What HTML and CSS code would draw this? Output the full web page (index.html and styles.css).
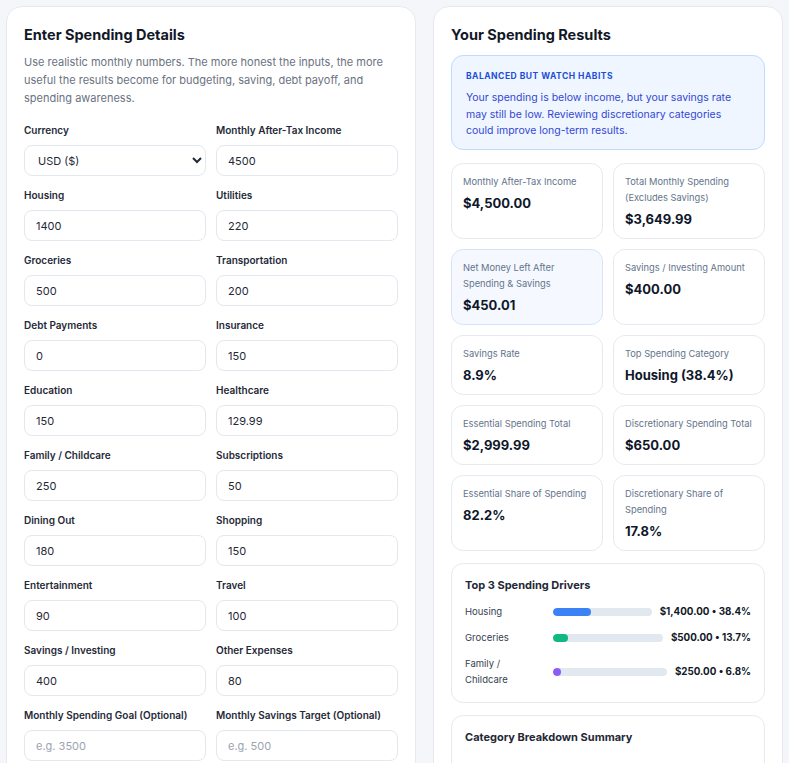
FILE: index.html
```html
<!DOCTYPE html>
<html lang="en">
<head>
    <meta charset="UTF-8">
    <meta name="viewport" content="width=device-width, initial-scale=1.0">
    <title>Spending Calculator</title>
    <link rel="stylesheet" href="styles.css">
</head>
<body>
    <div class="layout">
        <div class="panel form-panel">
            <h2>Enter Spending Details</h2>
            <p class="intro">Use realistic monthly numbers. The more honest the inputs, the more useful the results become for budgeting, saving, debt payoff, and spending awareness.</p>
            <div class="form-grid">
                <div class="field">
                    <label for="currency">Currency</label>
                    <select id="currency">
                        <option>USD ($)</option>
                        <option>EUR (€)</option>
                        <option>GBP (£)</option>
                    </select>
                </div>
                <div class="field">
                    <label for="income">Monthly After-Tax Income</label>
                    <input type="text" id="income" value="4500">
                </div>
                <div class="field">
                    <label for="housing">Housing</label>
                    <input type="text" id="housing" value="1400">
                </div>
                <div class="field">
                    <label for="utilities">Utilities</label>
                    <input type="text" id="utilities" value="220">
                </div>
                <div class="field">
                    <label for="groceries">Groceries</label>
                    <input type="text" id="groceries" value="500">
                </div>
                <div class="field">
                    <label for="transport">Transportation</label>
                    <input type="text" id="transport" value="200">
                </div>
                <div class="field">
                    <label for="debt">Debt Payments</label>
                    <input type="text" id="debt" value="0">
                </div>
                <div class="field">
                    <label for="insurance">Insurance</label>
                    <input type="text" id="insurance" value="150">
                </div>
                <div class="field">
                    <label for="education">Education</label>
                    <input type="text" id="education" value="150">
                </div>
                <div class="field">
                    <label for="healthcare">Healthcare</label>
                    <input type="text" id="healthcare" value="129.99">
                </div>
                <div class="field">
                    <label for="family">Family / Childcare</label>
                    <input type="text" id="family" value="250">
                </div>
                <div class="field">
                    <label for="subs">Subscriptions</label>
                    <input type="text" id="subs" value="50">
                </div>
                <div class="field">
                    <label for="dining">Dining Out</label>
                    <input type="text" id="dining" value="180">
                </div>
                <div class="field">
                    <label for="shopping">Shopping</label>
                    <input type="text" id="shopping" value="150">
                </div>
                <div class="field">
                    <label for="fun">Entertainment</label>
                    <input type="text" id="fun" value="90">
                </div>
                <div class="field">
                    <label for="travel">Travel</label>
                    <input type="text" id="travel" value="100">
                </div>
                <div class="field">
                    <label for="savings">Savings / Investing</label>
                    <input type="text" id="savings" value="400">
                </div>
                <div class="field">
                    <label for="other">Other Expenses</label>
                    <input type="text" id="other" value="80">
                </div>
                <div class="field">
                    <label for="goal">Monthly Spending Goal (Optional)</label>
                    <input type="text" id="goal" placeholder="e.g. 3500">
                </div>
                <div class="field">
                    <label for="target">Monthly Savings Target (Optional)</label>
                    <input type="text" id="target" placeholder="e.g. 500">
                </div>
            </div>
        </div>

        <div class="panel results-panel">
            <h2>Your Spending Results</h2>
            <div class="status-box">
                <div class="status-title">Balanced but watch habits</div>
                <p>Your spending is below income, but your savings rate may still be low. Reviewing discretionary categories could improve long-term results.</p>
            </div>

            <div class="stat-grid">
                <div class="stat">
                    <div class="stat-label">Monthly After-Tax Income</div>
                    <div class="stat-value">$4,500.00</div>
                </div>
                <div class="stat">
                    <div class="stat-label">Total Monthly Spending (Excludes Savings)</div>
                    <div class="stat-value">$3,649.99</div>
                </div>
                <div class="stat highlight">
                    <div class="stat-label">Net Money Left After Spending &amp; Savings</div>
                    <div class="stat-value">$450.01</div>
                </div>
                <div class="stat">
                    <div class="stat-label">Savings / Investing Amount</div>
                    <div class="stat-value">$400.00</div>
                </div>
                <div class="stat">
                    <div class="stat-label">Savings Rate</div>
                    <div class="stat-value">8.9%</div>
                </div>
                <div class="stat">
                    <div class="stat-label">Top Spending Category</div>
                    <div class="stat-value">Housing (38.4%)</div>
                </div>
                <div class="stat">
                    <div class="stat-label">Essential Spending Total</div>
                    <div class="stat-value">$2,999.99</div>
                </div>
                <div class="stat">
                    <div class="stat-label">Discretionary Spending Total</div>
                    <div class="stat-value">$650.00</div>
                </div>
                <div class="stat">
                    <div class="stat-label">Essential Share of Spending</div>
                    <div class="stat-value">82.2%</div>
                </div>
                <div class="stat">
                    <div class="stat-label">Discretionary Share of Spending</div>
                    <div class="stat-value">17.8%</div>
                </div>
            </div>

            <div class="section-box">
                <h3>Top 3 Spending Drivers</h3>
                <div class="driver">
                    <span class="driver-name">Housing</span>
                    <div class="bar"><div class="bar-fill blue" style="width: 38.4%"></div></div>
                    <span class="driver-value">$1,400.00 • 38.4%</span>
                </div>
                <div class="driver">
                    <span class="driver-name">Groceries</span>
                    <div class="bar"><div class="bar-fill green" style="width: 13.7%"></div></div>
                    <span class="driver-value">$500.00 • 13.7%</span>
                </div>
                <div class="driver">
                    <span class="driver-name">Family / Childcare</span>
                    <div class="bar"><div class="bar-fill purple" style="width: 6.8%"></div></div>
                    <span class="driver-value">$250.00 • 6.8%</span>
                </div>
            </div>

            <div class="section-box">
                <h3>Category Breakdown Summary</h3>
                <div class="breakdown">
                    <div class="breakdown-row"><span>Housing</span><span>$1,400.00</span></div>
                    <div class="breakdown-row"><span>Groceries</span><span>$500.00</span></div>
                    <div class="breakdown-row"><span>Family / Childcare</span><span>$250.00</span></div>
                </div>
            </div>
        </div>
    </div>
</body>
</html>
```

FILE: styles.css
```css
body {
    font-family: 'Inter', 'Liberation Sans', sans-serif;
    margin: 0;
    padding: 0;
    background-color: #f4f6fa;
    color: #111827;
}

.layout {
    display: grid;
    grid-template-columns: minmax(0, 410fr) minmax(0, 350fr);
    gap: 17px;
    padding: 6px;
    align-items: start;
}

.panel {
    background-color: white;
    border: 1px solid #e6eaf0;
    border-radius: 16px;
    padding: 17px;
    min-width: 0;
}

.panel h2 {
    margin: 0;
    font-size: 14.5px;
    line-height: 22px;
    font-weight: 700;
    color: #111827;
}

.intro {
    margin: 7px 0 15px;
    font-size: 11px;
    line-height: 18px;
    color: #6b7280;
}

.form-grid {
    display: grid;
    grid-template-columns: minmax(0, 1fr) minmax(0, 1fr);
    column-gap: 10px;
    row-gap: 11px;
}

.field {
    display: flex;
    flex-direction: column;
    gap: 7px;
    min-width: 0;
}

.field label {
    font-size: 10px;
    line-height: 16px;
    font-weight: 600;
    color: #1f2937;
}

.field input,
.field select {
    width: 100%;
    min-width: 0;
    height: 31px;
    box-sizing: border-box;
    border: 1px solid #e2e8f0;
    border-radius: 8px;
    background-color: white;
    padding: 0 11px;
    font-family: inherit;
    font-size: 11px;
    color: #1f2937;
}

.field select {
    padding: 0 8px 0 9px;
}

.field input::placeholder {
    color: #9ca3af;
}

.status-box {
    margin-top: 9px;
    background-color: #eff6ff;
    border: 1px solid #bfdbfe;
    border-radius: 12px;
    padding: 13px 14px 9px;
}

.status-title {
    font-size: 8.5px;
    line-height: 14px;
    font-weight: 700;
    letter-spacing: 0.5px;
    text-transform: uppercase;
    color: #1d4ed8;
}

.status-box p {
    margin: 7px 0 0;
    font-size: 10.5px;
    line-height: 16.5px;
    color: #3347d4;
}

.stat-grid {
    display: grid;
    grid-template-columns: minmax(0, 1fr) minmax(0, 1fr);
    gap: 10px;
    margin-top: 13px;
}

.stat {
    border: 1px solid #e6eaf0;
    border-radius: 12px;
    padding: 10px 11px;
    display: flex;
    flex-direction: column;
    gap: 4px;
}

.stat.highlight {
    background-color: #f5f9ff;
    border-color: #d6e4fb;
}

.stat-label {
    font-size: 9.3px;
    line-height: 16px;
    color: #64748b;
}

.stat-value {
    font-size: 13px;
    line-height: 18px;
    font-weight: 700;
    color: #0f172a;
}

.section-box {
    margin-top: 12px;
    border: 1px solid #e6eaf0;
    border-radius: 12px;
    padding: 13px 13px 14px;
}

.section-box h3 {
    margin: 0 0 11px;
    font-size: 11px;
    line-height: 16px;
    font-weight: 700;
    color: #1f2937;
}

.driver {
    display: grid;
    grid-template-columns: 80px minmax(0, 1fr) auto;
    align-items: center;
    gap: 8px;
    margin-bottom: 10px;
}

.driver:last-child {
    margin-bottom: 0;
}

.driver-name {
    font-size: 9.5px;
    line-height: 16px;
    color: #374151;
}

.bar {
    height: 8px;
    border-radius: 4px;
    background-color: #e2e8f0;
    overflow: hidden;
}

.bar-fill {
    height: 100%;
    border-radius: 4px;
    min-width: 8px;
}

.bar-fill.blue {
    background-color: #3b82f6;
}

.bar-fill.green {
    background-color: #10b981;
}

.bar-fill.purple {
    background-color: #8b5cf6;
}

.driver-value {
    font-size: 9.8px;
    font-weight: 700;
    color: #111827;
}

.breakdown {
    padding-top: 8px;
}

.breakdown-row {
    display: flex;
    justify-content: space-between;
    font-size: 10px;
    line-height: 24px;
    color: #374151;
    border-top: 1px solid #eef1f5;
}
```
